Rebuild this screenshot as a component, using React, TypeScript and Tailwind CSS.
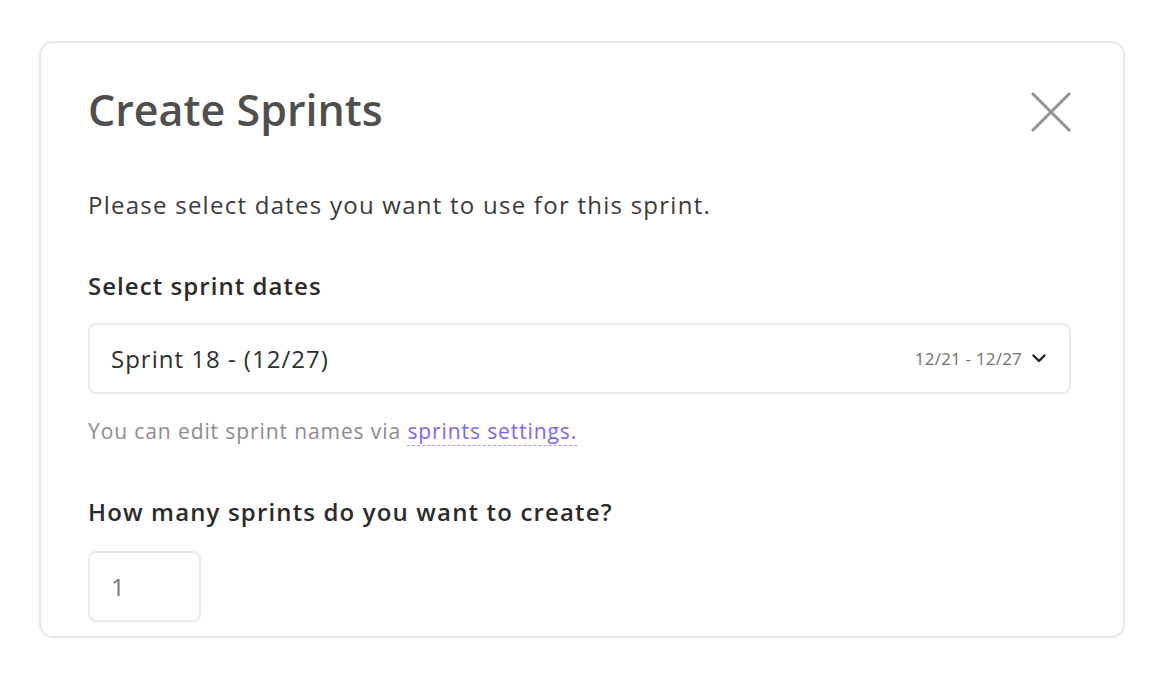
const font = { fontFamily: '"Open Sans", "Noto Sans", sans-serif' };

export default function App() {
  return (
    <div className="min-h-[680px] bg-white pl-[39px] pt-[41px]" style={font}>
      <div className="box-border h-[597px] w-[1086px] overflow-hidden rounded-[14px] border-2 border-[#e7e7ee] pl-[47px] pr-[52px] pt-[39px]">
        <div className="flex items-center justify-between">
          <h1 className="text-[43px] font-semibold leading-[56px] text-[#4f4f4f]">Create Sprints</h1>
          <button className="mr-[-1px] mt-[3px] flex h-[42px] w-[42px] items-center justify-center text-[#929292]">
            <svg width="40" height="40" viewBox="0 0 40 40" fill="none" stroke="currentColor" strokeWidth="3" strokeLinecap="round">
              <path d="M2 2 L38 38 M38 2 L2 38" />
            </svg>
          </button>
        </div>

        <p className="mt-[51px] text-[24px] leading-[32px] tracking-[1.25px] text-[#3a3a3a]">
          Please select dates you want to use for this sprint.
        </p>

        <p className="mt-[49px] text-[24px] font-semibold leading-[32px] tracking-[1.05px] text-[#2b2b2b]">Select sprint dates</p>

        <div className="mt-[21px] flex h-[71px] items-center justify-between rounded-[8px] border-2 border-[#e9e9f0] pl-[21px] pr-[23px]">
          <span className="text-[24px] tracking-[1px] text-[#2e2e2e]">Sprint 18 - (12/27)</span>
          <span className="flex items-center gap-[10px] text-[17px] tracking-[0.2px] text-[#707070]">
            12/21 - 12/27
            <svg width="14" height="9" viewBox="0 0 14 9" fill="none" stroke="#222" strokeWidth="2.4" strokeLinecap="round" strokeLinejoin="round">
              <path d="M1.5 1.5 L7 7 L12.5 1.5" />
            </svg>
          </span>
        </div>

        <p className="mt-[23px] text-[21px] leading-[28px] tracking-[0.9px] text-[#8c8c8c]">
          You can edit sprint names via{" "}
          <a className="border-b-[1.5px] border-dashed border-[#a59af5] text-[#7b68ee]">sprints settings.</a>
        </p>

        <p className="mt-[51px] text-[24px] font-semibold leading-[32px] tracking-[1.15px] text-[#2b2b2b]">
          How many sprints do you want to create?
        </p>

        <div className="mt-[23px] flex h-[71px] w-[113px] items-center rounded-[8px] border-2 border-[#e9e9f0] pl-[21px] text-[24px] text-[#777]">
          1
        </div>
      </div>
    </div>
  );
}
